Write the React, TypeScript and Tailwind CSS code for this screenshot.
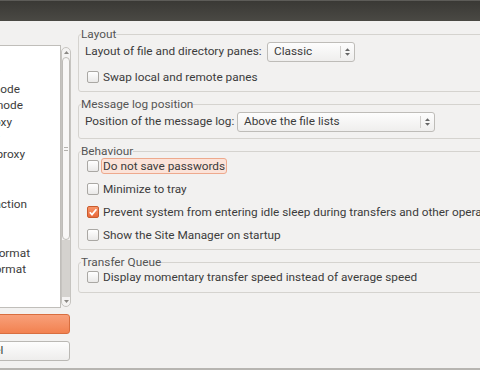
import React from 'react';

type TreeRow = { label: string; pr: string };

// only the right-hand ends of the tree labels are in view
const treeRows: TreeRow[] = [
  { label: 'Connection', pr: 'pr-[70px]' },
  { label: 'FTP', pr: 'pr-[70px]' },
  { label: 'Active mode', pr: 'pr-[40px]' },
  { label: 'Passive mode', pr: 'pr-[37px]' },
  { label: 'FTP Proxy', pr: 'pr-[48px]' },
  { label: 'SFTP', pr: 'pr-[70px]' },
  { label: 'Generic proxy', pr: 'pr-[35px]' },
  { label: 'Transfers', pr: 'pr-[70px]' },
  { label: 'File Types', pr: 'pr-[70px]' },
  { label: 'File exists action', pr: 'pr-[33px]' },
  { label: 'Interface', pr: 'pr-[70px]' },
  { label: 'Themes', pr: 'pr-[70px]' },
  { label: 'Date/time format', pr: 'pr-[30px]' },
  { label: 'Filesize format', pr: 'pr-[34px]' },
  { label: 'File lists', pr: 'pr-[70px]' },
  { label: 'Language', pr: 'pr-[70px]' },
];

const Checkbox: React.FC<{ checked?: boolean }> = ({ checked }) =>
  checked ? (
    <span className="w-[12px] h-[12px] shrink-0 rounded-[2px] border border-[#c95b2c] bg-gradient-to-b from-[#f79568] to-[#e9683a] flex items-center justify-center">
      <svg width="10" height="10" viewBox="0 0 10 10">
        <path d="M1.8 5.2 L4 7.6 L8.4 2.2" fill="none" stroke="#ffffff" strokeWidth="1.7" />
      </svg>
    </span>
  ) : (
    <span className="w-[12px] h-[12px] shrink-0 rounded-[2px] border border-[#aaa8a4] bg-gradient-to-b from-[#ffffff] to-[#eae9e8]" />
  );

const CheckRow: React.FC<{ label: string; checked?: boolean; focused?: boolean }> = ({
  label,
  checked,
  focused,
}) => (
  <div className="flex items-center h-[16px] pl-[2px]">
    <Checkbox checked={checked} />
    <span
      className={`ml-[2px] h-[16px] px-[1px] leading-[14px] whitespace-nowrap rounded-[3px] border ${
        focused ? 'bg-[#fbe3d9] border-[#eea98d]' : 'border-transparent'
      }`}
    >
      {label}
    </span>
  </div>
);

const SelectBox: React.FC<{ value: string; width: string }> = ({ value, width }) => (
  <div
    className={`h-[20px] shrink-0 flex items-center rounded-[3px] border border-[#bebcb8] bg-gradient-to-b from-[#fdfdfd] to-[#efeeed] ${width}`}
  >
    <span className="flex-1 pl-[6px] whitespace-nowrap">{value}</span>
    <span className="w-px h-[12px] bg-[#d0cecb]" />
    <span className="w-[13px] flex justify-center">
      <svg width="7" height="12" viewBox="0 0 7 12">
        <path d="M1 5 L3.5 2.3 L6 5 Z" fill="#666" />
        <path d="M1 7 L3.5 9.7 L6 7 Z" fill="#666" />
      </svg>
    </span>
  </div>
);

const Frame: React.FC<{ title: string; children: React.ReactNode }> = ({ title, children }) => (
  <fieldset className="w-[500px] shrink-0 rounded-[3px] border border-[#d5d3cf]">
    <legend className="ml-[2px] leading-[14px] text-[#555]">{title}</legend>
    {children}
  </fieldset>
);

const Scrollbar: React.FC = () => (
  <div className="mt-[2px] w-[10px] h-[260px] flex flex-col rounded-[5px] border border-[#c6c4c0] bg-[#f4f3f2] overflow-hidden">
    <div className="h-[9px] flex items-center justify-center">
      <svg width="5" height="3" viewBox="0 0 5 3">
        <path d="M0 3 L2.5 0 L5 3 Z" fill="#8a8884" />
      </svg>
    </div>
    <div className="h-[183px] rounded-[4px] border border-[#bebcb8] bg-[#f8f7f6] flex flex-col items-center justify-center gap-[2px]">
      <span className="w-[4px] h-px bg-[#b3b1ad]" />
      <span className="w-[4px] h-px bg-[#b3b1ad]" />
    </div>
    <div className="flex-1 bg-[#d4d2ce]" />
    <div className="h-[9px] flex items-center justify-center">
      <svg width="5" height="3" viewBox="0 0 5 3">
        <path d="M0 0 L2.5 3 L5 0 Z" fill="#8a8884" />
      </svg>
    </div>
  </div>
);

const App: React.FC = () => {
  return (
    <div className="w-[480px] h-[370px] overflow-hidden flex flex-col bg-[#f2f1f0] font-['Roboto',sans-serif] text-[11.8px] text-[#3c3c3c]">
      {/* Title bar */}
      <div className="h-[21px] shrink-0 border-t border-[#5d5c58] bg-gradient-to-b from-[#3a3935] to-[#4a4944]" />

      <div className="flex flex-1 min-h-0 gap-[7px]">
        {/* Page tree + buttons */}
        <div className="w-[71px] shrink-0 flex flex-col pt-[24px] overflow-hidden">
          <div className="flex h-[263px]">
            <div className="w-[61px] h-full bg-white border-t border-r border-b border-[#c0beba] pt-[2px] overflow-hidden">
              {treeRows.map((row) => (
                <div
                  key={row.label}
                  className={`h-[16.4px] leading-[16.4px] flex justify-end overflow-hidden whitespace-nowrap ${row.pr}`}
                >
                  {row.label}
                </div>
              ))}
            </div>
            <Scrollbar />
          </div>
          <button className="mt-[6px] -ml-[99px] w-[169px] h-[20px] shrink-0 rounded-[3px] border border-[#d86e3f] bg-gradient-to-b from-[#f8a07a] to-[#f2814f] text-white">
            OK
          </button>
          <button className="mt-[7px] -ml-[99px] w-[169px] h-[20px] shrink-0 rounded-[3px] border border-[#bab8b4] bg-gradient-to-b from-[#fdfdfd] to-[#eeedec] text-[#3c3c3c]">
            Cancel
          </button>
        </div>

        {/* Interface settings */}
        <div className="flex-1 min-w-0 overflow-hidden pt-[6px] flex flex-col gap-[5px]">
          <Frame title="Layout">
            <div className="pl-[6px] pt-[1px] pb-[6px] flex flex-col gap-[7px]">
              <div className="flex items-center h-[20px]">
                <span className="w-[182px] whitespace-nowrap">Layout of file and directory panes:</span>
                <SelectBox value="Classic" width="w-[88px]" />
              </div>
              <CheckRow label="Swap local and remote panes" />
            </div>
          </Frame>

          <Frame title="Message log position">
            <div className="pl-[6px] pt-[1px] pb-[6px]">
              <div className="flex items-center h-[20px]">
                <span className="w-[152px] whitespace-nowrap">Position of the message log:</span>
                <SelectBox value="Above the file lists" width="w-[198px]" />
              </div>
            </div>
          </Frame>

          <Frame title="Behaviour">
            <div className="pl-[6px] pb-[6px] flex flex-col gap-[7px]">
              <CheckRow label="Do not save passwords" focused />
              <CheckRow label="Minimize to tray" />
              <CheckRow label="Prevent system from entering idle sleep during transfers and other operations" checked />
              <CheckRow label="Show the Site Manager on startup" />
            </div>
          </Frame>

          <Frame title="Transfer Queue">
            <div className="pl-[6px] pb-[7px]">
              <CheckRow label="Display momentary transfer speed instead of average speed" />
            </div>
          </Frame>
        </div>
      </div>

      <div className="h-[2px] shrink-0 bg-[#b7b5b1]" />
    </div>
  );
};

export default App;
